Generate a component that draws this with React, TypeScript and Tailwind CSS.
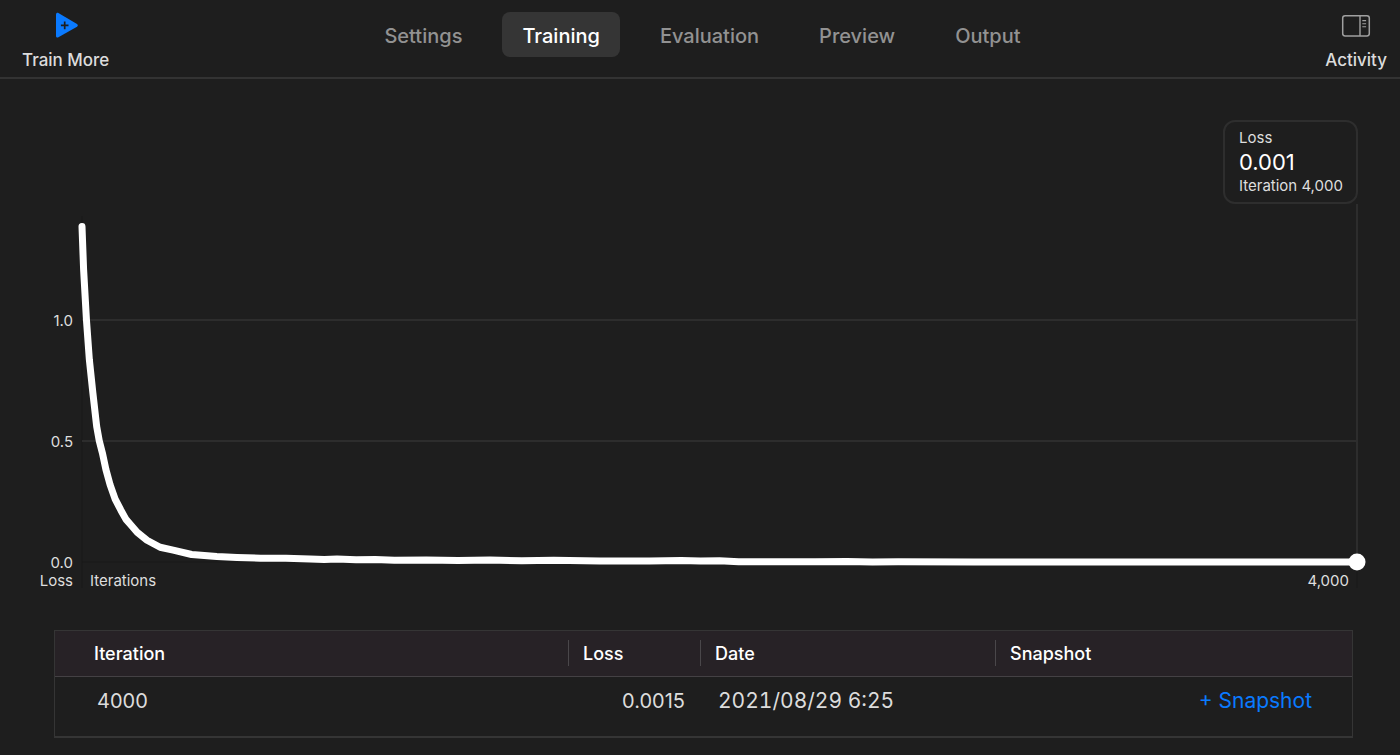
const TABS = ['Settings', 'Training', 'Evaluation', 'Preview', 'Output'];

// [iteration, loss]
const LOSS: [number, number][] = [
  [0, 1.386], [5, 1.209], [14, 1.0], [23, 0.837], [34, 0.7], [46, 0.56],
  [54, 0.502], [64, 0.45], [75, 0.382], [88, 0.32], [104, 0.26], [122, 0.214],
  [138, 0.176], [150, 0.158], [173, 0.123], [204, 0.09], [245, 0.061],
  [286, 0.049], [344, 0.031], [423, 0.023], [486, 0.019], [560, 0.016],
  [640, 0.016], [715, 0.012], [760, 0.01], [800, 0.012], [860, 0.009],
  [920, 0.01], [980, 0.007], [1080, 0.008], [1180, 0.006], [1280, 0.008],
  [1380, 0.005], [1480, 0.007], [1625, 0.004], [1780, 0.004], [1880, 0.006],
  [1940, 0.004], [2000, 0.005], [2060, 0.001], [2300, 0.001], [2400, 0.002],
  [2480, 0], [2560, 0.001], [2800, 0], [4000, 0],
];

const PLOT_W = 1275;
const PLOT_H = 368;
const ZERO_Y = 358;
const UNIT = 242;

const px = (iteration: number) => (iteration / 4000) * PLOT_W;
const py = (loss: number) => ZERO_Y - loss * UNIT;

function PlayPlusIcon() {
  return (
    <svg width="24" height="26" viewBox="0 0 24 26" aria-hidden="true">
      <path
        d="M2 2.4C2 1.1 3.3.4 4.4 1L23 11.9c1.1.7 1.1 2.1 0 2.8L4.4 25.3C3.3 25.9 2 25.2 2 23.9z"
        fill="#0a7aff"
      />
      <path d="M10.7 9.6v7.6M6.9 13.4h7.6" stroke="#1e1e1e" strokeWidth="1.7" />
    </svg>
  );
}

function SidebarIcon() {
  return (
    <svg width="30" height="24" viewBox="0 0 30 24" fill="none" stroke="#a0a0a0" aria-hidden="true">
      <rect x="1.7" y="1.7" width="26.6" height="20.2" rx="2.4" strokeWidth="1.5" />
      <path d="M19 1.7v20.2" strokeWidth="1.4" />
      <path d="M21.3 6.6h3.8M21.3 9.7h3.8M21.3 12.8h3.8" strokeWidth="1.1" />
    </svg>
  );
}

function Toolbar() {
  return (
    <header className="grid grid-cols-[1fr_auto_1fr] items-start border-b-2 border-[#333333] h-[79px] pl-[22px] pr-[13px]">
      <button className="justify-self-start flex flex-col items-center gap-[10px] pt-3 text-[17px] leading-6 font-medium text-[#dcdcdc]">
        <PlayPlusIcon />
        Train More
      </button>

      <nav className="flex gap-5 pt-3 pr-1">
        {TABS.map((tab) => (
          <button
            key={tab}
            className={
              tab === 'Training'
                ? 'h-[45px] px-5 pt-[3px] rounded-lg bg-[#353535] text-xl font-medium text-white'
                : 'h-[45px] px-5 pt-[3px] rounded-lg text-xl font-medium text-[#929292]'
            }
          >
            {tab}
          </button>
        ))}
      </nav>

      <button className="justify-self-end flex flex-col items-center gap-[10px] pt-[14px] text-[17px] leading-6 font-medium text-[#dcdcdc]">
        <SidebarIcon />
        Activity
      </button>
    </header>
  );
}

function LossChart() {
  return (
    <section className="flex flex-col pt-[41px] pl-9 pr-[42px]">
      <div className="self-end w-[135px] h-[84px] rounded-xl border-2 border-[#2e2e2e] pl-[14px] pt-[6px] text-[#dedede]">
        <p className="text-[15px] leading-5">Loss</p>
        <p className="text-[22px] leading-7 text-white">0.001</p>
        <p className="text-[15px] leading-5 whitespace-nowrap">Iteration 4,000</p>
      </div>

      <div className="flex pr-px text-[15px] leading-[18px] text-[#dedede]">
        {/* Y axis */}
        <div className="w-[46px] pr-[9px] pt-[108px] flex flex-col text-right">
          <span className="mb-[103px]">1.0</span>
          <span className="mb-[103px]">0.5</span>
          <span>0.0</span>
          <span>Loss</span>
        </div>

        <div className="flex-1 min-w-0">
          <svg
            className="block w-full h-[368px] overflow-visible"
            viewBox={`0 0 ${PLOT_W} ${PLOT_H}`}
            preserveAspectRatio="none"
            fill="none"
            role="img"
            aria-label="Training loss by iteration"
          >
            <path d={`M0 12V384M0 ${ZERO_Y}H${PLOT_W}M${PLOT_W} ${ZERO_Y}V384`} stroke="#191919" vectorEffect="non-scaling-stroke" />
            <path
              d={`M0 ${py(1)}H${PLOT_W}M0 ${py(0.5)}H${PLOT_W}M${PLOT_W} 0V${ZERO_Y}`}
              stroke="#2d2d2d"
              strokeWidth="2"
              vectorEffect="non-scaling-stroke"
            />
            <polyline
              points={LOSS.map(([i, l]) => `${px(i)},${py(l)}`).join(' ')}
              stroke="white"
              strokeWidth="7"
              strokeLinecap="round"
              strokeLinejoin="round"
              vectorEffect="non-scaling-stroke"
            />
            {/* End marker */}
            <path
              d={`M${PLOT_W} ${ZERO_Y}h.01`}
              stroke="white"
              strokeWidth="17"
              strokeLinecap="round"
              vectorEffect="non-scaling-stroke"
            />
          </svg>
          <div className="flex justify-between px-2">
            <span>Iterations</span>
            <span>4,000</span>
          </div>
        </div>
      </div>
    </section>
  );
}

function SnapshotTable() {
  return (
    <section className="mt-10 ml-[54px] mr-[47px] border border-b-2 border-[#353535]">
      <table className="w-full table-fixed border-collapse text-left">
        <thead className="bg-[#272226] text-lg text-white">
          <tr className="h-[45px] border-b border-[#444144]">
            <th className="pl-[39px] pt-[2px] font-medium">Iteration</th>
            <th className="w-[132px] font-medium">
              <div className="border-l border-[#4a474a] pl-[14px] pt-[2px] leading-6">Loss</div>
            </th>
            <th className="w-[295px] font-medium">
              <div className="border-l border-[#4a474a] pl-[14px] pt-[2px] leading-6">Date</div>
            </th>
            <th className="w-[357px] font-medium">
              <div className="border-l border-[#4a474a] pl-[14px] pt-[2px] leading-6">Snapshot</div>
            </th>
          </tr>
        </thead>
        <tbody className="text-xl text-[#dcdcdc]">
          <tr className="h-[60px]">
            <td className="pl-[42px] pb-[11px]">4000</td>
            <td className="pr-[15px] pb-[11px] text-right">0.0015</td>
            <td className="pl-[18px] pb-[11px] text-[21px] tabular-nums">2021/08/29 6:25</td>
            <td className="pr-10 pb-[11px] text-right text-[21px]">
              <button className="text-[#0a7aff]">+ Snapshot</button>
            </td>
          </tr>
        </tbody>
      </table>
    </section>
  );
}

export default function App() {
  return (
    <div className="min-h-screen bg-[#1e1e1e] font-['Inter',sans-serif]">
      <Toolbar />
      <main>
        <LossChart />
        <SnapshotTable />
      </main>
    </div>
  );
}
